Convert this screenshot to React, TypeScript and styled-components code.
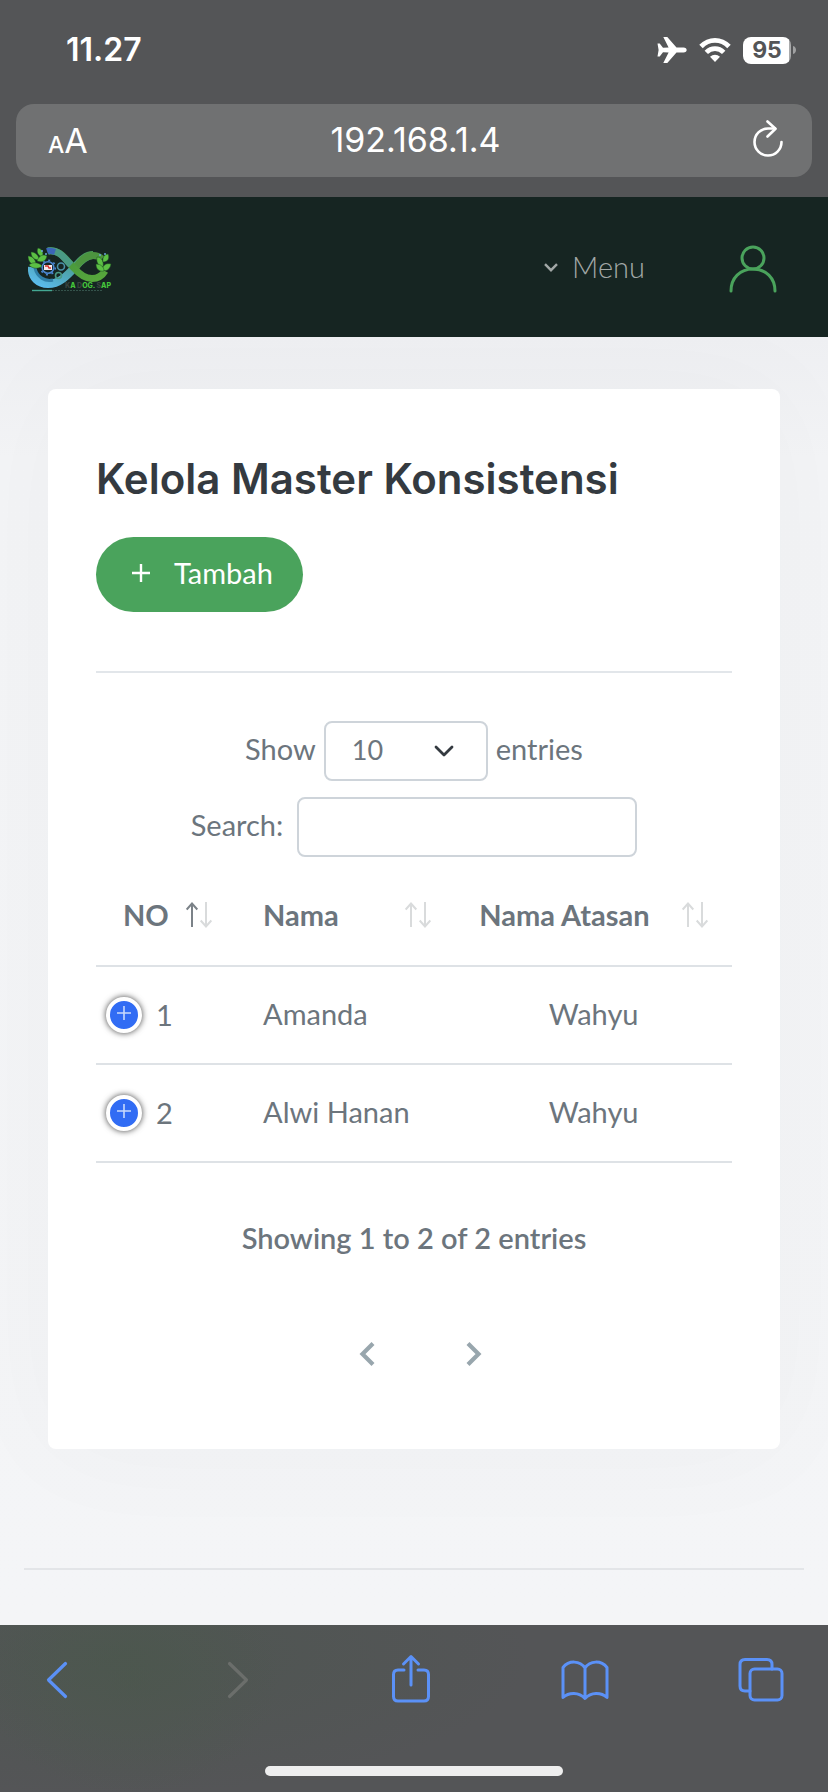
import React from "react";
import styled, { createGlobalStyle } from "styled-components";

const GlobalStyle = createGlobalStyle`
  * { box-sizing: border-box; }
  body {
    margin: 0;
    background: #f4f5f7;
    color: #6c757d;
    font-family: "Lato", "Open Sans", sans-serif;
    font-size: 29px;
    line-height: 42px;
  }
  button, input, select { font: inherit; color: inherit; margin: 0; }
  button { padding: 0; border: 0; background: none; cursor: pointer; }
  svg { display: block; flex: none; }
`;

const Page = styled.div`
  display: flex;
  flex-direction: column;
  min-height: 100vh;
`;

const BrowserTop = styled.div`
  background: #545557;
  color: #fff;
  padding: 0 16px 20px;
  font-family: "Inter", sans-serif;
`;

const StatusBar = styled.div`
  display: flex;
  align-items: center;
  justify-content: space-between;
  height: 104px;
  padding: 0 16px 4px 50px;
`;

const Time = styled.span`
  font-size: 32px;
  font-weight: 600;
`;

const StatusIcons = styled.div`
  display: flex;
  align-items: center;
  gap: 12px;
`;

const Battery = styled.div`
  display: flex;
  align-items: center;
  gap: 2px;
`;

const BatteryLevel = styled.span`
  width: 48px;
  height: 27px;
  border-radius: 8px;
  background: linear-gradient(90deg, #fff 46px, #a9aaab 46px);
  color: #545557;
  font-size: 23px;
  font-weight: 700;
  line-height: 27px;
  text-align: center;
`;

const AddressBar = styled.div`
  display: flex;
  align-items: center;
  justify-content: space-between;
  height: 73px;
  padding: 0 29px 0 32px;
  border-radius: 18px;
  background: #707172;
`;

const TextSizeButton = styled.button`
  display: flex;
  align-items: baseline;
  width: 40px;
  padding-top: 4px;
  font-size: 34px;
`;

const SmallLetter = styled.span`
  font-size: 23px;
  font-weight: 500;
`;

const AddressInput = styled.input`
  flex: 1;
  min-width: 0;
  padding: 0 0 2px;
  border: 0;
  background: none;
  font-size: 34px;
  text-align: center;
`;

const ReloadButton = styled.button`
  display: flex;
  justify-content: flex-end;
  width: 40px;
  padding-bottom: 4px;
`;

const Header = styled.header`
  display: flex;
  align-items: center;
  height: 140px;
  padding: 4px 51px 0 28px;
  background: #162522;
`;

const LogoLink = styled.a`
  margin-right: auto;
  padding-top: 2px;
`;

const MenuButton = styled.button`
  display: flex;
  align-items: center;
  gap: 14px;
  margin-right: 84px;
  padding-bottom: 4px;
  color: #a2a8a7;
  font-weight: 300;
`;

const Main = styled.main`
  flex: 1;
  padding: 52px 48px 0;
  overflow: hidden;
  background: linear-gradient(#eeeff2, #f3f4f6 120px, #f4f5f7);
`;

const Card = styled.section`
  padding: 64px 48px 83px;
  border-radius: 8px;
  background: #fff;
  box-shadow: 0 0 120px rgba(40, 50, 70, 0.03);
`;

const Title = styled.h1`
  margin: 0 0 32px;
  color: #343a40;
  font-family: "Inter", sans-serif;
  font-size: 42px;
  font-weight: 600;
  line-height: 52px;
`;

const AddButton = styled.button`
  display: flex;
  align-items: center;
  gap: 24px;
  height: 75px;
  padding: 0 30px 4px 36px;
  border-radius: 38px;
  background: #4aa35c;
  color: #fff;
`;

const Divider = styled.hr`
  height: 2px;
  margin: 59px 0 48px;
  border: 0;
  background: #e2e6ea;
`;

const Controls = styled.div`
  display: flex;
  flex-direction: column;
  align-items: center;
  gap: 16px;
`;

const FieldText = styled.label`
  padding-bottom: 4px;
`;

const LengthRow = styled.div`
  display: flex;
  align-items: center;
  gap: 8px;
`;

const SearchRow = styled.div`
  display: flex;
  align-items: center;
  gap: 14px;
`;

const SelectBox = styled.div`
  position: relative;
  width: 164px;
`;

const LengthSelect = styled.select`
  width: 100%;
  height: 60px;
  padding: 0 64px 2px 26px;
  border: 2px solid #ced4da;
  border-radius: 8px;
  background: #fff;
  font-size: 27px;
  appearance: none;
`;

const SelectArrow = styled.svg`
  position: absolute;
  top: 24px;
  right: 34px;
  pointer-events: none;
`;

const SearchInput = styled.input`
  width: 340px;
  height: 60px;
  padding: 0 16px;
  border: 2px solid #ced4da;
  border-radius: 8px;
  background: #fff;
`;

const Table = styled.table`
  width: 100%;
  margin-top: 12px;
  border-collapse: collapse;
  table-layout: fixed;
`;

const Column = styled.col<{ $share: number }>`
  width: ${(p) => p.$share}%;
`;

const HeadCell = styled.th`
  height: 97px;
  padding: 0 24px 4px;
  border-bottom: 2px solid #dee2e6;
  font-weight: 700;
  text-align: left;

  &:first-child {
    padding-left: 27px;
    padding-right: 27px;
  }
`;

const SortButton = styled.button`
  display: flex;
  align-items: center;
  justify-content: space-between;
  width: 100%;
  font-weight: 700;
`;

const Cell = styled.td<{ $center?: boolean }>`
  height: 98px;
  padding: 0 24px 2px;
  border-bottom: 2px solid #dee2e6;
  text-align: ${(p) => (p.$center ? "center" : "left")};
`;

const NumberCell = styled(Cell)`
  padding: 0 10px;
`;

const NumberContent = styled.div`
  display: flex;
  align-items: center;
  gap: 14px;
`;

const ExpandButton = styled.button`
  display: grid;
  place-items: center;
  width: 36px;
  height: 36px;
  border: 4px solid #fff;
  border-radius: 50%;
  background: #316cf4;
  box-shadow: 0 0 6px #444;
`;

const Info = styled.p`
  margin: 54px 0 0;
  font-weight: 600;
  text-align: center;
`;

const Pager = styled.nav`
  display: flex;
  justify-content: center;
  gap: 64px;
  margin-top: 83px;
  padding-left: 12px;
`;

const PageButton = styled.button`
  display: grid;
  place-items: center;
  width: 43px;
  height: 24px;
`;

const FooterLine = styled.hr`
  height: 2px;
  margin: 119px -24px 54px;
  border: 0;
  background: #e3e5e8;
`;

const Toolbar = styled.nav`
  display: flex;
  flex-direction: column;
  justify-content: space-between;
  height: 167px;
  padding: 27px 0 16px;
  background:
    radial-gradient(ellipse 150px 120px at 130px 50px, rgba(75, 88, 76, 0.6), transparent),
    radial-gradient(ellipse 420px 140px at 110px 30px, rgba(77, 86, 80, 0.8), transparent),
    #545557;
`;

const ToolbarRow = styled.div`
  display: flex;
  justify-content: space-between;
  padding: 0 42px 0 33px;
`;

const ToolButton = styled.button`
  width: 50px;
  height: 54px;
  color: #5b91f7;

  &:disabled {
    color: #6b6e6b;
    cursor: default;
  }
`;

const HomeIndicator = styled.div`
  align-self: center;
  width: 36%;
  height: 10px;
  border-radius: 5px;
  background: #eee;
`;

function Logo() {
  return (
    <svg width="84" height="46" viewBox="0 0 84 46" role="img" aria-label="Ka Dog. Sap">
      <defs>
        <linearGradient id="loopBlue" x1="0" y1="1" x2="1" y2="0">
          <stop offset="0" stopColor="#5cbdf0" />
          <stop offset="0.45" stopColor="#4fa5b4" />
          <stop offset="1" stopColor="#4a9a55" />
        </linearGradient>
        <linearGradient id="loopGreen" x1="0" y1="0" x2="1" y2="1">
          <stop offset="0" stopColor="#3f8f3c" />
          <stop offset="1" stopColor="#58a83c" />
        </linearGradient>
      </defs>
      <g fill="none" strokeLinecap="butt">
        <path d="M4 20 C3 31 11 37 20 37 C31 37 39 29 47 20 C53 13 58 8 65 8" stroke="url(#loopBlue)" strokeWidth="8" />
        <path d="M48 20 C53 13 58 8.500 65 8.500 C69 8.500 72 10 74 12" stroke="#4c943f" strokeWidth="7" />
        <path d="M20 4 C32 2 38 13 46 21 C52 28 58 31.500 64 31.500 C70 31.500 74 29 77 24" stroke="url(#loopGreen)" strokeWidth="7" />
        <path d="M20 4 C31 2 36 11 43 18" stroke="#4a9a84" strokeWidth="7" />
        <path d="M19 4 C22 3 24 4 27 5" stroke="#3b66b8" strokeWidth="6" />
        <path d="M7 21 C9 30 17 35 25 33" stroke="#2f7fa8" strokeWidth="3" />
        <circle cx="20" cy="20.500" r="5.800" stroke="#4a86d0" strokeWidth="1.600" />
        <circle cx="20" cy="20.500" r="7.300" stroke="#4a86d0" strokeWidth="1.600" strokeDasharray="2 3.730" />
        <circle cx="33" cy="19.500" r="3.500" stroke="#4a90a8" strokeWidth="1.600" />
        <circle cx="30.500" cy="28.500" r="3" stroke="#4a9a84" strokeWidth="1.600" />
      </g>
      <rect x="16" y="18" width="8" height="5" fill="#f3e9ec" />
      <path d="M17 19h3l1 2h2" stroke="#d8322f" strokeWidth="1.500" fill="none" />
      <g fill="#5cc044" stroke="#1d4a22" strokeWidth="0.500">
        <path d="M0 9c5 0 8 4 8 9-5 0-8-4-8-9z" />
        <path d="M1 18c4-4 11-2 13 1-4 4-11 2-13-1z" />
        <path d="M3 5c5 0 8 4 8 8-5 0-8-3-8-8z" />
        <path d="M10 1c5 1 6 6 4 9-4-2-6-5-4-9z" />
        <path d="M9 14c2-6 7-7 10-5-1 5-5 7-10 5z" />
        <path d="M69 10c5 0 7 5 6 10-5-1-7-5-6-10z" />
        <path d="M75 15c-1-5 2-8 5-8 2 4 0 8-5 8z" />
        <path d="M74 23c1-6 5-7 9-6-1 5-4 8-9 6z" />
        <path d="M68 17c5 0 8 3 8 7-5 1-8-2-8-7z" />
      </g>
      <g fill="#6aa5d8">
        <circle cx="14" cy="4" r="1" />
        <circle cx="18" cy="7" r="1" />
        <circle cx="72" cy="8" r="1" />
        <circle cx="77" cy="7" r="1" />
      </g>
      <text x="37" y="41" fontFamily="Inter, sans-serif" fontSize="7" fontWeight="800" fill="#45c43b">
        <tspan fill="#39433f">K</tspan>A <tspan fill="#39433f">D</tspan>OG. <tspan fill="#39433f">S</tspan>AP
      </text>
      <path d="M4 43.500h20" stroke="#43a893" strokeWidth="1.400" />
      <path d="M24 43.500h50" stroke="#34534b" strokeWidth="1.200" strokeDasharray="2 1" />
    </svg>
  );
}

function SortIcon({ ascending = false }: { ascending?: boolean }) {
  return (
    <svg width="26" height="26" viewBox="0 0 26 26" fill="none" strokeWidth="2" aria-hidden="true">
      <path d="M6 25V2M0.700 7.500L6 1.500l5.300 6" stroke={ascending ? "#7b8288" : "#d9dbdc"} />
      <path d="M20 0v24M14.700 18.500l5.300 6 5.300-6" stroke="#d9dbdc" />
    </svg>
  );
}

const columns = [
  { label: "NO", share: 22.5, ascending: true },
  { label: "Nama", share: 34, ascending: false },
  { label: "Nama Atasan", share: 43.5, ascending: false },
];

const rows = [
  { no: 1, nama: "Amanda", atasan: "Wahyu" },
  { no: 2, nama: "Alwi Hanan", atasan: "Wahyu" },
];

export default function App() {
  return (
    <Page>
      <GlobalStyle />
      <BrowserTop>
        <StatusBar>
          <Time>11.27</Time>
          <StatusIcons>
            <svg width="30" height="28" viewBox="0 0 30 28" fill="#fff" aria-label="Airplane mode">
              <path d="M0.500 7.500h2.200L6 11.800l5.600-.2L6.300 1h4l9.200 10.600h7c4.200 0 4.200 4.800 0 4.800h-7L10.300 27h-4l5.300-10.600-5.600-.2-3.300 4.300H0.500L1.600 14z" />
            </svg>
            <svg width="32" height="26" viewBox="0 0 32 26" aria-label="Wi-Fi">
              <g fill="none" stroke="#fff" strokeWidth="4.800">
                <path d="M2 9.500C10 1.200 22 1.200 30 9.500" />
                <path d="M7.300 15.400c5-5 12.400-5 17.400 0" />
              </g>
              <path d="M11 19.800c3-2.700 7-2.700 10 0L16 25z" fill="#fff" />
            </svg>
            <Battery>
              <BatteryLevel>95</BatteryLevel>
              <svg width="3" height="8" viewBox="0 0 3 8" fill="#a0a1a2" aria-hidden="true">
                <path d="M0 0c4 1 4 7 0 8z" />
              </svg>
            </Battery>
          </StatusIcons>
        </StatusBar>
        <AddressBar>
          <TextSizeButton aria-label="Text size">
            <SmallLetter>A</SmallLetter>A
          </TextSizeButton>
          <AddressInput aria-label="Address" defaultValue="192.168.1.4" />
          <ReloadButton aria-label="Reload">
            <svg width="30" height="38" viewBox="0 0 30 38" fill="none" stroke="#fff" strokeWidth="2.600" strokeLinecap="round" strokeLinejoin="round">
              <path d="M28.500 22A13.500 13.500 0 1 1 15 8.500h7" />
              <path d="M14.500 1.500L22.500 8.800 14.500 16.500" />
            </svg>
          </ReloadButton>
        </AddressBar>
      </BrowserTop>

      <Header>
        <LogoLink href="#">
          <Logo />
        </LogoLink>
        <MenuButton>
          <svg width="14" height="9" viewBox="0 0 14 9" fill="none" stroke="currentColor" strokeWidth="2.400" aria-hidden="true">
            <path d="M1 1.200l6 6 6-6" />
          </svg>
          Menu
        </MenuButton>
        <button aria-label="Account">
          <svg width="48" height="48" viewBox="0 0 48 48" fill="none" stroke="#4aa35c" strokeWidth="3" strokeLinecap="round">
            <circle cx="24" cy="13" r="11" />
            <path d="M2 46C2 33 11 24 24 24s22 9 22 22" />
          </svg>
        </button>
      </Header>

      <Main>
        <Card>
          <Title>Kelola Master Konsistensi</Title>
          <AddButton>
            <svg width="18" height="18" viewBox="0 0 18 18" stroke="#fff" strokeWidth="2.400" aria-hidden="true">
              <path d="M9 0v18M0 9h18" />
            </svg>
            Tambah
          </AddButton>
          <Divider />

          <Controls>
            <LengthRow>
              <FieldText htmlFor="length">Show</FieldText>
              <SelectBox>
                <LengthSelect id="length" defaultValue="10">
                  <option>10</option>
                  <option>25</option>
                  <option>50</option>
                  <option>100</option>
                </LengthSelect>
                <SelectArrow width="20" height="12" viewBox="0 0 20 12" fill="none" stroke="#343a40" strokeWidth="2.800" strokeLinecap="round" strokeLinejoin="round">
                  <path d="M2 2l8 8 8-8" />
                </SelectArrow>
              </SelectBox>
              <FieldText as="span">entries</FieldText>
            </LengthRow>
            <SearchRow>
              <FieldText htmlFor="search">Search:</FieldText>
              <SearchInput id="search" type="search" />
            </SearchRow>
          </Controls>

          <Table>
            <colgroup>
              {columns.map((c) => (
                <Column key={c.label} $share={c.share} />
              ))}
            </colgroup>
            <thead>
              <tr>
                {columns.map((c) => (
                  <HeadCell key={c.label} scope="col">
                    <SortButton>
                      {c.label}
                      <SortIcon ascending={c.ascending} />
                    </SortButton>
                  </HeadCell>
                ))}
              </tr>
            </thead>
            <tbody>
              {rows.map((r) => (
                <tr key={r.no}>
                  <NumberCell>
                    <NumberContent>
                      <ExpandButton aria-label={`Details for ${r.nama}`}>
                        <svg width="14" height="18" viewBox="0 0 14 18" stroke="#c9dafc" strokeWidth="1.600" aria-hidden="true">
                          <path d="M7 0v14M0 7h14" />
                        </svg>
                      </ExpandButton>
                      {r.no}
                    </NumberContent>
                  </NumberCell>
                  <Cell>{r.nama}</Cell>
                  <Cell $center>{r.atasan}</Cell>
                </tr>
              ))}
            </tbody>
          </Table>

          <Info>Showing 1 to 2 of 2 entries</Info>
          <Pager aria-label="Table pages">
            <PageButton aria-label="Previous">
              <svg width="16" height="24" viewBox="0 0 16 24" fill="none" stroke="#98a6ad" strokeWidth="4.200">
                <path d="M14 1.500L3.500 12 14 22.500" />
              </svg>
            </PageButton>
            <PageButton aria-label="Next">
              <svg width="16" height="24" viewBox="0 0 16 24" fill="none" stroke="#98a6ad" strokeWidth="4.200">
                <path d="M2 1.500L12.500 12 2 22.500" />
              </svg>
            </PageButton>
          </Pager>
        </Card>
        <FooterLine />
      </Main>

      <Toolbar aria-label="Browser">
        <ToolbarRow>
          <ToolButton aria-label="Back">
            <svg width="50" height="54" viewBox="0 0 50 54" fill="none" stroke="currentColor" strokeWidth="3.200" strokeLinecap="round" strokeLinejoin="round">
              <path d="M32.500 11.500L15.500 28l17 16.500" />
            </svg>
          </ToolButton>
          <ToolButton aria-label="Forward" disabled>
            <svg width="50" height="54" viewBox="0 0 50 54" fill="none" stroke="currentColor" strokeWidth="3.200" strokeLinecap="round" strokeLinejoin="round">
              <path d="M20.500 11.500l17 16.500-17 16.500" />
            </svg>
          </ToolButton>
          <ToolButton aria-label="Share">
            <svg width="50" height="54" viewBox="0 0 50 54" fill="none" stroke="currentColor" strokeWidth="3" strokeLinecap="round" strokeLinejoin="round">
              <path d="M19 18h-6q-4.500 0-4.500 4.500v22q0 4.500 4.500 4.500h26q4.500 0 4.500-4.500v-22Q43.500 18 39 18h-6M26 33V5M18.500 12L26 4.500l7.500 7.500" />
            </svg>
          </ToolButton>
          <ToolButton aria-label="Bookmarks">
            <svg width="50" height="54" viewBox="0 0 50 54" fill="none" stroke="currentColor" strokeWidth="3" strokeLinecap="round" strokeLinejoin="round">
              <path d="M25 16C20 8.500 9 8 3 15.500v30c6-5.500 16-5.500 22 1 6-6.500 16-6.500 22-1v-30C41 8 30 8.500 25 16zM25 16v30" />
            </svg>
          </ToolButton>
          <ToolButton aria-label="Tabs">
            <svg width="50" height="54" viewBox="0 0 50 54" fill="none" stroke="currentColor" strokeWidth="3" strokeLinecap="round" strokeLinejoin="round">
              <rect x="14" y="17" width="32" height="31" rx="4.500" />
              <path d="M14 39H9q-5 0-5-5V12.500q0-5 5-5h22q5 0 5 5V17" />
            </svg>
          </ToolButton>
        </ToolbarRow>
        <HomeIndicator />
      </Toolbar>
    </Page>
  );
}
